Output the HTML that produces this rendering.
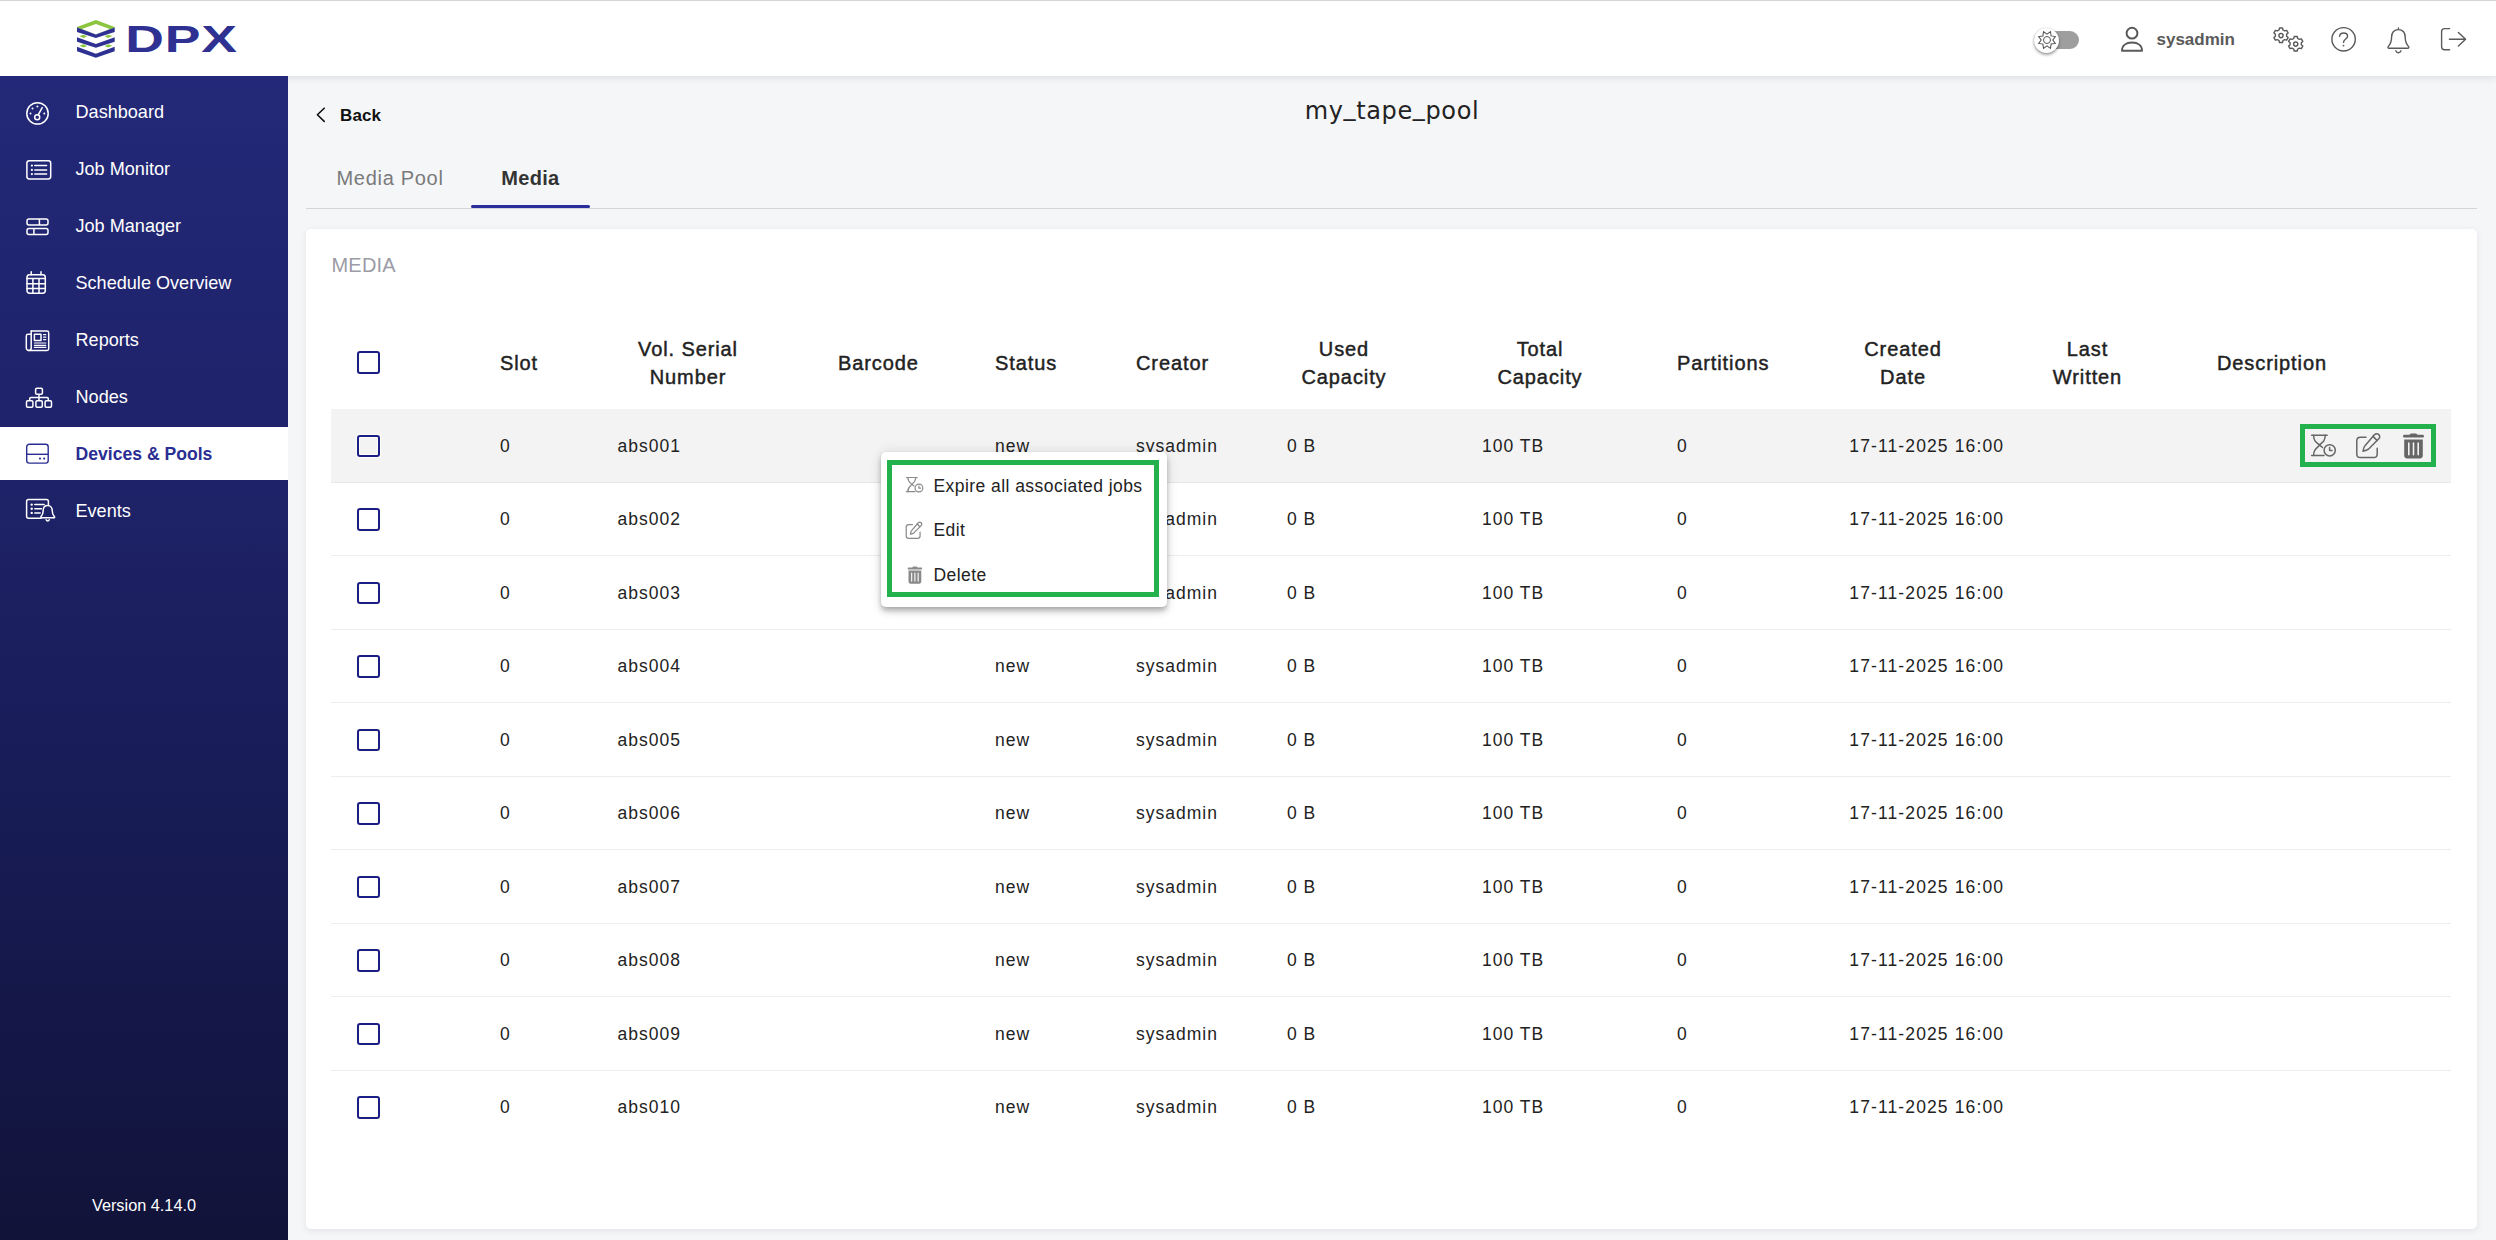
<!DOCTYPE html>
<html lang="en">
<head>
<meta charset="utf-8">
<title>DPX - my_tape_pool - Media</title>
<style>
*{box-sizing:border-box;margin:0;padding:0}
html,body{width:2496px;height:1240px;overflow:hidden}
body{position:relative;background:#f5f6f8;font-family:"Liberation Sans",sans-serif;color:#222;-webkit-font-smoothing:antialiased}
svg{display:block;overflow:visible}
.abs{position:absolute}

/* ---------- top bar ---------- */
#topbar{position:absolute;left:0;top:0;width:2496px;height:76px;background:#fff;box-shadow:inset 0 1px 0 #d3d4d8,0 1px 8px rgba(60,64,80,.16);z-index:2}
#logo{position:absolute;left:76.8px;top:19.6px}
#toggle{position:absolute;left:2034px;top:27.2px;width:46px;height:26px}
#toggle .track{position:absolute;left:0;top:3.8px;width:45px;height:17.7px;border-radius:9px;background:#9e9e9e}
#toggle .thumb{position:absolute;left:0;top:0.5px;width:25px;height:25px;border-radius:50%;background:#fff;box-shadow:0 2px 3px rgba(0,0,0,.35),0 0 2px rgba(0,0,0,.2)}
#user{position:absolute;left:2156.5px;top:27.3px;height:26px;line-height:26px;font-size:17px;font-weight:bold;color:#5a5a5a;letter-spacing:0}

/* ---------- sidebar ---------- */
#sidebar{position:absolute;left:0;top:76px;width:288px;height:1164px;background:linear-gradient(180deg,#232878 0%,#1e2268 35%,#161a50 70%,#111339 100%);z-index:3}
.nav{position:absolute;left:0;width:288px;height:53px}
.nav span{position:absolute;left:75.5px;top:0.7px;height:53px;line-height:53px;font-size:18.1px;letter-spacing:0;color:#fff;white-space:nowrap}
.nav svg{position:absolute}
.nav.active{background:#fff}
.nav.active span{color:#2a2e93;font-weight:bold;font-size:17.6px;letter-spacing:0;top:.8px}
#version{position:absolute;left:0;width:288px;top:1119.4px;text-align:center;color:#fff;font-size:16.3px;line-height:20px}

/* ---------- main ---------- */
#back{position:absolute;left:340px;top:104.2px;height:24px;line-height:24px;font-size:17px;letter-spacing:.1px;font-weight:bold;color:#111}
#title{position:absolute;left:1092px;width:600px;top:94px;height:34px;line-height:34px;text-align:center;font-family:"DejaVu Sans","Liberation Sans",sans-serif;font-size:24px;letter-spacing:.62px;color:#222}
#title span{position:relative;top:-4.2px}
.tab{position:absolute;top:164px;height:28px;line-height:28px;font-size:20px;white-space:nowrap}
#tabline{position:absolute;left:306px;top:208px;width:2171px;height:1px;background:#d4d6db}
#inkbar{position:absolute;left:471px;top:204.5px;width:119px;height:3.5px;border-radius:2px;background:#2b2f9c}
#card{position:absolute;left:306px;top:229px;width:2171px;height:1000px;background:#fff;border-radius:5px;box-shadow:0 2px 6px rgba(60,64,80,.10)}
#cardtitle{position:absolute;left:331.5px;top:251px;height:28px;line-height:28px;font-size:20px;color:#9b9ba6;letter-spacing:.2px}
</style>
</head>
<body>

<!-- ================= TOP BAR ================= -->
<div id="topbar">
  <svg id="logo" width="162" height="40" viewBox="0 0 162 40">
    <!-- stacked layers mark -->
    <polygon points="0,6.9 18.85,0 37.7,6.9 37.7,7.7 18.85,14.6 0,7.7" fill="#8cc63f"/>
    <polygon points="18.85,3.9 32.9,9 18.85,14.5 4.8,9" fill="#fff"/>
    <polygon points="0,7.5 18.85,14.4 37.7,7.5 37.7,12 18.85,18.1 0,12" fill="#2e3192"/>
    <polygon points="2.4,16.1 6.2,14.7 10.2,16.3 6.6,17.9" fill="#8cc63f"/>
    <polygon points="35.3,16.1 31.5,14.7 27.5,16.3 31.1,17.9" fill="#8cc63f"/>
    <polygon points="0,17.15 18.85,24.05 37.7,17.15 37.7,21.65 18.85,27.75 0,21.65" fill="#2e3192"/>
    <polygon points="2.4,25.75 6.2,24.35 10.2,25.95 6.6,27.55" fill="#8cc63f"/>
    <polygon points="35.3,25.75 31.5,24.35 27.5,25.95 31.1,27.55" fill="#8cc63f"/>
    <polygon points="0,26.8 18.85,33.7 37.7,26.8 37.7,31.3 18.85,37.7 0,31.3" fill="#2e3192"/>
    <text x="0" y="0" transform="translate(48.2,32.1) scale(1.425,1)" font-family="Liberation Sans, sans-serif" font-weight="bold" font-size="37.6" fill="#2e3192" letter-spacing="0.6">DPX</text>
  </svg>

  <div id="toggle">
    <div class="track"></div>
    <div class="thumb"></div>
    <svg class="abs" style="left:3.5px;top:4px" width="18" height="18" viewBox="-9 -9 18 18" fill="none" stroke="#555" stroke-width="1">
      <polygon transform="rotate(22.5) scale(1.05)" points="0,-8.6 2.1,-5.1 6.1,-6.1 5.1,-2.1 8.6,0 5.1,2.1 6.1,6.1 2.1,5.1 0,8.6 -2.1,5.1 -6.1,6.1 -5.1,2.1 -8.6,0 -5.1,-2.1 -6.1,-6.1 -2.1,-5.1" stroke-linejoin="miter"/>
      <circle r="3.5"/>
    </svg>
  </div>

  <svg class="abs" style="left:2120px;top:26px" width="24" height="26" viewBox="0 0 24 26" fill="none" stroke="#5a5a5a" stroke-width="2">
    <circle cx="12" cy="7.2" r="5.4"/>
    <path d="M2 24.8 C2 19.5 6 16.6 12 16.6 C18 16.6 22 19.5 22 24.8 Z" stroke-linejoin="round"/>
  </svg>
  <div id="user">sysadmin</div>

  <!-- cogs -->
  <svg class="abs" style="left:2272px;top:26px" width="34" height="28" viewBox="0 0 34 28" fill="none" stroke="#5a5a5a" stroke-width="1.4">
    <g transform="translate(9,9.6)">
      <path d="M-1.5,-7.6 h3 l.5,2 l1.6,.9 l2,-.6 l1.5,2.6 l-1.5,1.4 v1.9 l1.5,1.4 l-1.5,2.6 l-2,-.6 l-1.6,.9 l-.5,2 h-3 l-.5,-2 l-1.6,-.9 l-2,.6 l-1.5,-2.6 l1.5,-1.4 v-1.9 l-1.5,-1.4 l1.5,-2.6 l2,.6 l1.6,-.9 z" stroke-linejoin="round"/>
      <circle r="2.1"/>
    </g>
    <g transform="translate(23.7,18.1)">
      <path d="M-1.5,-7.6 h3 l.5,2 l1.6,.9 l2,-.6 l1.5,2.6 l-1.5,1.4 v1.9 l1.5,1.4 l-1.5,2.6 l-2,-.6 l-1.6,.9 l-.5,2 h-3 l-.5,-2 l-1.6,-.9 l-2,.6 l-1.5,-2.6 l1.5,-1.4 v-1.9 l-1.5,-1.4 l1.5,-2.6 l2,.6 l1.6,-.9 z" stroke-linejoin="round"/>
      <circle r="2.1"/>
    </g>
  </svg>
  <!-- help -->
  <svg class="abs" style="left:2330px;top:26px" width="28" height="28" viewBox="0 0 28 28" fill="none" stroke="#5a5a5a" stroke-width="1.4">
    <circle cx="13.6" cy="13.3" r="11.7"/>
    <path d="M9.6 10.3 C9.8 7.9 11.5 7 13.6 7 C16 7 17.6 8.3 17.6 10.2 C17.6 13 13.5 13.2 13.5 16.4" stroke-linecap="round"/>
    <circle cx="13.5" cy="19.6" r=".9" fill="#5a5a5a" stroke="none"/>
  </svg>
  <!-- bell -->
  <svg class="abs" style="left:2386px;top:25.6px" width="26" height="28" viewBox="0 0 26 28" fill="none" stroke="#5a5a5a" stroke-width="1.4" stroke-linecap="round" stroke-linejoin="round">
    <path d="M12.4 2 v1.6 M12.4 3.6 C7.8 3.6 5.6 7 5.6 11 C5.6 16.5 4 18.6 2.2 20.6 C1.6 21.4 2 22.3 3 22.3 H21.8 C22.8 22.3 23.2 21.4 22.6 20.6 C20.8 18.6 19.2 16.5 19.2 11 C19.2 7 17 3.6 12.4 3.6 Z"/>
    <path d="M9.8 24.8 C10.3 26.2 11.3 26.8 12.4 26.8 C13.5 26.8 14.5 26.2 15 24.8"/>
  </svg>
  <!-- logout -->
  <svg class="abs" style="left:2440px;top:26.6px" width="28" height="26" viewBox="0 0 28 26" fill="none" stroke="#5a5a5a" stroke-width="1.4" stroke-linecap="round" stroke-linejoin="round">
    <path d="M9.6 1.6 H4.6 C2.8 1.6 1.6 2.8 1.6 4.6 V19.8 C1.6 21.6 2.8 22.8 4.6 22.8 H9.6"/>
    <path d="M9.4 12.2 H25.4 M18.4 5.4 L25.6 12.2 L18.4 19"/>
  </svg>
</div>

<!-- ================= SIDEBAR ================= -->
<div id="sidebar">
  <div class="nav" style="top:9.750px">
    <svg style="left:25px;top:15px" width="25" height="25" viewBox="0 0 25 25" fill="none" stroke="#fff" stroke-width="1.5" stroke-linecap="round">
      <circle cx="12.5" cy="12.4" r="10.7"/>
      <circle cx="12.2" cy="16.2" r="2.5"/>
      <path d="M13.2 13.9 L17.2 6.6"/>
      <g fill="#fff" stroke="none"><circle cx="7.5" cy="7.5" r="1"/><circle cx="12.4" cy="5.5" r="1"/><circle cx="5.5" cy="12.4" r="1"/><circle cx="19.3" cy="12.4" r="1"/></g>
    </svg>
    <span>Dashboard</span>
  </div>
  <div class="nav" style="top:66.625px">
    <svg style="left:25px;top:16px" width="28" height="22" viewBox="0 0 28 22" fill="none" stroke="#fff" stroke-width="1.5" stroke-linecap="round">
      <rect x="1.9" y="1.7" width="23.8" height="18.2" rx="2.4"/>
      <path d="M9.8 6.6 H21.6 M9.8 10.9 H21.6 M9.8 15.1 H21.6"/>
      <g fill="#fff" stroke="none"><circle cx="6.9" cy="6.6" r="1.1"/><circle cx="6.9" cy="10.9" r="1.1"/><circle cx="6.9" cy="15.1" r="1.1"/></g>
    </svg>
    <span>Job Monitor</span>
  </div>
  <div class="nav" style="top:123.500px">
    <svg style="left:25px;top:18px" width="26" height="20" viewBox="0 0 26 20" fill="none" stroke="#fff" stroke-width="1.5">
      <rect x="2" y="1.1" width="21" height="5.8" rx="2"/>
      <rect x="2" y="10.6" width="21" height="5.8" rx="2"/>
      <path d="M14.4 1.1 V6.9 M8.9 10.6 V16.4"/>
    </svg>
    <span>Job Manager</span>
  </div>
  <div class="nav" style="top:180.375px">
    <svg style="left:25px;top:14px" width="24" height="26" viewBox="0 0 24 26" fill="none" stroke="#fff" stroke-width="1.5" stroke-linecap="round">
      <rect x="2" y="4.8" width="18.3" height="18.4" rx="2.6"/>
      <path d="M6.2 1.8 V4.8 M16 1.8 V4.8 M2 8.4 H20.3 M2 13.7 H20.3 M2 18.6 H20.3 M7.9 8.4 V23.2 M14 8.4 V23.2"/>
    </svg>
    <span>Schedule Overview</span>
  </div>
  <div class="nav" style="top:237.250px">
    <svg style="left:25px;top:16.6px" width="26" height="22" viewBox="0 0 26 22" fill="none" stroke="#fff" stroke-width="1.5" stroke-linecap="round" stroke-linejoin="round">
      <path d="M6.2 1.1 H22 C23 1.1 23.7 1.8 23.7 2.8 V18.7 C23.7 19.7 23 20.4 22 20.4 H3.8 C2.4 20.4 1.3 19.3 1.3 17.9 V6 C1.3 5 2 4.3 3 4.3 H6.2"/>
      <path d="M6.2 1.1 V17.9 C6.2 19.3 5.2 20.4 3.8 20.4"/>
      <rect x="9.4" y="4.3" width="6.6" height="6.1"/>
      <path d="M18.6 4.7 H20.8 M18.6 7.2 H20.8 M18.6 9.7 H20.8 M9.4 13 H20.8 M9.4 15.3 H20.8 M9.4 17.4 H20.8" stroke-width="1.2"/>
    </svg>
    <span>Reports</span>
  </div>
  <div class="nav" style="top:294.125px">
    <svg style="left:25px;top:16.5px" width="28" height="22" viewBox="0 0 28 22" fill="none" stroke="#fff" stroke-width="1.5" stroke-linejoin="round">
      <rect x="10.6" y="1.2" width="6.8" height="6" rx="1.2"/>
      <rect x="1.5" y="13.8" width="6.4" height="6.4" rx="1.2"/>
      <rect x="10.9" y="13.8" width="6.4" height="6.4" rx="1.2"/>
      <rect x="20.1" y="13.8" width="6.4" height="6.4" rx="1.2"/>
      <path d="M14 7.2 V13.8 M4.7 13.8 V11.8 C4.7 11 5.2 10.5 6 10.5 H22 C22.8 10.5 23.3 11 23.3 11.800000000000001 V13.8"/>
    </svg>
    <span>Nodes</span>
  </div>
  <div class="nav active" style="top:351.000px">
    <svg style="left:25px;top:16px" width="26" height="22" viewBox="0 0 26 22" fill="none" stroke="#2a2e93" stroke-width="1.4">
      <rect x="1.7" y="1.3" width="21.5" height="18.8" rx="2.6"/>
      <path d="M1.7 11.3 H23.2"/>
      <g fill="#2a2e93" stroke="none"><circle cx="15" cy="15.6" r="1.05"/><circle cx="19.2" cy="15.6" r="1.05"/></g>
    </svg>
    <span>Devices &amp; Pools</span>
  </div>
  <div class="nav" style="top:407.875px">
    <svg style="left:25px;top:14px" width="32" height="26" viewBox="0 0 32 26" fill="none" stroke="#fff" stroke-width="1.5" stroke-linecap="round" stroke-linejoin="round">
      <path d="M16 20.3 H3.6 C2.4 20.3 1.6 19.5 1.6 18.3 V3.5 C1.6 2.300000000000001 2.4 1.5 3.6 1.5 H21.4 C22.6 1.5 23.4 2.3 23.4 3.5 V6.5"/>
      <path d="M9.8 6.6 H19.2 M9.8 10.7 H16.4 M9.8 14.9 H15.2"/>
      <g fill="#fff" stroke="none"><circle cx="6.7" cy="6.6" r="1.2"/><circle cx="6.7" cy="10.7" r="1.2"/><circle cx="6.7" cy="14.9" r="1.2"/></g>
      <path d="M22.7 7.6 C19.6 7.6 18.2 10 18.2 12.6 C18.2 16 17.2 17.4 16 18.6 C15.6 19.1 15.8 19.8 16.5 19.8 H28.9 C29.6 19.8 29.8 19.1 29.4 18.6 C28.2 17.4 27.2 16 27.2 12.6 C27.2 10 25.8 7.6 22.7 7.6 Z" fill="#1d2166"/>
      <path d="M21.2 21.8 C21.5 22.6 22 23 22.7 23 C23.4 23 23.9 22.6 24.2 21.8"/>
    </svg>
    <span>Events</span>
  </div>
  <div id="version">Version 4.14.0</div>
</div>

<!-- ================= MAIN ================= -->
<svg class="abs" style="left:315px;top:106px" width="12" height="18" viewBox="0 0 12 18" fill="none" stroke="#111" stroke-width="1.6" stroke-linecap="round" stroke-linejoin="round"><path d="M9.2 2.2 L2.4 8.8 L9.2 15.4"/></svg>
<div id="back">Back</div>
<div id="title">my<span>_</span>tape<span>_</span>pool</div>

<div class="tab" style="left:336.5px;color:#7a7a7a;letter-spacing:.7px">Media Pool</div>
<div class="tab" style="left:501.3px;color:#333;font-weight:bold;letter-spacing:.3px">Media</div>
<div id="tabline"></div>
<div id="inkbar"></div>

<div id="card"></div>
<div id="cardtitle">MEDIA</div>

<!--TABLE-->

<style>
#thead{position:absolute;left:331px;top:315px;width:2120px;height:94px}
.th{position:absolute;top:19.8px;line-height:28px;font-size:20px;color:#222;white-space:nowrap;letter-spacing:.9px;-webkit-text-stroke:.45px #222;text-align:center}
.th.one{top:33.7px}
.cb{position:absolute;left:26px;width:23px;height:22.5px;border:2px solid #1a1e86;border-radius:3px;background:transparent;box-shadow:0 0 0 1px #fffef6,inset 0 0 0 1px #fffef6}
.row{position:absolute;left:331px;width:2120px;height:73.5px;border-bottom:1px solid #ededee}
.row.hl{background:#f3f3f3;border-bottom-color:#e6e6e6}
.row.last{border-bottom:none}
.row .cb{top:25.2px}
.c{position:absolute;top:22.4px;height:28px;line-height:28px;font-size:17.5px;letter-spacing:1px;color:#222;white-space:nowrap}
</style>

<div id="thead">
  <div class="cb" style="top:36.2px"></div>
  <div class="th one" style="left:169px">Slot</div>
  <div class="th" style="left:287px;width:140px">Vol. Serial<br>Number</div>
  <div class="th one" style="left:507px">Barcode</div>
  <div class="th one" style="left:664px">Status</div>
  <div class="th one" style="left:805px">Creator</div>
  <div class="th" style="left:953px;width:120px">Used<br>Capacity</div>
  <div class="th" style="left:1149px;width:120px">Total<br>Capacity</div>
  <div class="th one" style="left:1346px">Partitions</div>
  <div class="th" style="left:1512px;width:120px">Created<br>Date</div>
  <div class="th" style="left:1696.5px;width:120px">Last<br>Written</div>
  <div class="th one" style="left:1886px">Description</div>
</div>
<div class="row hl" style="top:409.4px">
  <div class="cb"></div>
  <div class="c" style="left:169px">0</div>
  <div class="c" style="left:286.5px">abs001</div>
  <div class="c" style="left:664px">new</div>
  <div class="c" style="left:805px">sysadmin</div>
  <div class="c" style="left:956px">0 B</div>
  <div class="c" style="left:1151px">100 TB</div>
  <div class="c" style="left:1346px">0</div>
  <div class="c" style="left:1518.3px;letter-spacing:1.12px">17-11-2025 16:00</div>
</div>
<div class="row" style="top:482.9px">
  <div class="cb"></div>
  <div class="c" style="left:169px">0</div>
  <div class="c" style="left:286.5px">abs002</div>
  <div class="c" style="left:664px">new</div>
  <div class="c" style="left:805px">sysadmin</div>
  <div class="c" style="left:956px">0 B</div>
  <div class="c" style="left:1151px">100 TB</div>
  <div class="c" style="left:1346px">0</div>
  <div class="c" style="left:1518.3px;letter-spacing:1.12px">17-11-2025 16:00</div>
</div>
<div class="row" style="top:556.4px">
  <div class="cb"></div>
  <div class="c" style="left:169px">0</div>
  <div class="c" style="left:286.5px">abs003</div>
  <div class="c" style="left:664px">new</div>
  <div class="c" style="left:805px">sysadmin</div>
  <div class="c" style="left:956px">0 B</div>
  <div class="c" style="left:1151px">100 TB</div>
  <div class="c" style="left:1346px">0</div>
  <div class="c" style="left:1518.3px;letter-spacing:1.12px">17-11-2025 16:00</div>
</div>
<div class="row" style="top:629.9px">
  <div class="cb"></div>
  <div class="c" style="left:169px">0</div>
  <div class="c" style="left:286.5px">abs004</div>
  <div class="c" style="left:664px">new</div>
  <div class="c" style="left:805px">sysadmin</div>
  <div class="c" style="left:956px">0 B</div>
  <div class="c" style="left:1151px">100 TB</div>
  <div class="c" style="left:1346px">0</div>
  <div class="c" style="left:1518.3px;letter-spacing:1.12px">17-11-2025 16:00</div>
</div>
<div class="row" style="top:703.4px">
  <div class="cb"></div>
  <div class="c" style="left:169px">0</div>
  <div class="c" style="left:286.5px">abs005</div>
  <div class="c" style="left:664px">new</div>
  <div class="c" style="left:805px">sysadmin</div>
  <div class="c" style="left:956px">0 B</div>
  <div class="c" style="left:1151px">100 TB</div>
  <div class="c" style="left:1346px">0</div>
  <div class="c" style="left:1518.3px;letter-spacing:1.12px">17-11-2025 16:00</div>
</div>
<div class="row" style="top:776.9px">
  <div class="cb"></div>
  <div class="c" style="left:169px">0</div>
  <div class="c" style="left:286.5px">abs006</div>
  <div class="c" style="left:664px">new</div>
  <div class="c" style="left:805px">sysadmin</div>
  <div class="c" style="left:956px">0 B</div>
  <div class="c" style="left:1151px">100 TB</div>
  <div class="c" style="left:1346px">0</div>
  <div class="c" style="left:1518.3px;letter-spacing:1.12px">17-11-2025 16:00</div>
</div>
<div class="row" style="top:850.4px">
  <div class="cb"></div>
  <div class="c" style="left:169px">0</div>
  <div class="c" style="left:286.5px">abs007</div>
  <div class="c" style="left:664px">new</div>
  <div class="c" style="left:805px">sysadmin</div>
  <div class="c" style="left:956px">0 B</div>
  <div class="c" style="left:1151px">100 TB</div>
  <div class="c" style="left:1346px">0</div>
  <div class="c" style="left:1518.3px;letter-spacing:1.12px">17-11-2025 16:00</div>
</div>
<div class="row" style="top:923.9px">
  <div class="cb"></div>
  <div class="c" style="left:169px">0</div>
  <div class="c" style="left:286.5px">abs008</div>
  <div class="c" style="left:664px">new</div>
  <div class="c" style="left:805px">sysadmin</div>
  <div class="c" style="left:956px">0 B</div>
  <div class="c" style="left:1151px">100 TB</div>
  <div class="c" style="left:1346px">0</div>
  <div class="c" style="left:1518.3px;letter-spacing:1.12px">17-11-2025 16:00</div>
</div>
<div class="row" style="top:997.4px">
  <div class="cb"></div>
  <div class="c" style="left:169px">0</div>
  <div class="c" style="left:286.5px">abs009</div>
  <div class="c" style="left:664px">new</div>
  <div class="c" style="left:805px">sysadmin</div>
  <div class="c" style="left:956px">0 B</div>
  <div class="c" style="left:1151px">100 TB</div>
  <div class="c" style="left:1346px">0</div>
  <div class="c" style="left:1518.3px;letter-spacing:1.12px">17-11-2025 16:00</div>
</div>
<div class="row last" style="top:1070.9px">
  <div class="cb"></div>
  <div class="c" style="left:169px">0</div>
  <div class="c" style="left:286.5px">abs010</div>
  <div class="c" style="left:664px">new</div>
  <div class="c" style="left:805px">sysadmin</div>
  <div class="c" style="left:956px">0 B</div>
  <div class="c" style="left:1151px">100 TB</div>
  <div class="c" style="left:1346px">0</div>
  <div class="c" style="left:1518.3px;letter-spacing:1.12px">17-11-2025 16:00</div>
</div>

<!--POPUP-->
<style>
#actions{position:absolute;left:2300px;top:424px;width:136px;height:43px;border:5px solid #22b14c}
#menu{position:absolute;left:881px;top:452px;width:286px;height:155px;background:#fff;border-radius:5px;box-shadow:0 2.5px 5px -1.25px rgba(0,0,0,.2),0 5px 6.25px 0 rgba(0,0,0,.14),0 1.25px 12.5px 0 rgba(0,0,0,.12);z-index:5}
#menu .frame{position:absolute;left:6px;top:8px;width:272px;height:137px;border:5px solid #22b14c}
.mi{position:absolute;left:52.4px;height:28px;line-height:28px;font-size:17.5px;letter-spacing:.45px;color:#222;white-space:nowrap}
</style>
<div id="actions">
  <!-- expire (hourglass + clock) -->
  <svg class="abs" style="left:5px;top:4px" width="28" height="26" viewBox="0 0 28 26" fill="none" stroke="#666" stroke-width="1.5" stroke-linecap="round" stroke-linejoin="round">
    <path d="M1.6 2.2 H17.2 M1.6 22.6 H14"/>
    <path d="M3.6 2.2 C3.6 7.4 5.4 8.6 9.4 12 C13.4 8.6 15.2 7.4 15.2 2.2"/>
    <path d="M9.4 12 L12.4 14.4"/>
    <path d="M3.6 22.6 C3.6 17.4 5.4 16 9.4 12.4"/>
    <circle cx="19.7" cy="17.3" r="5.6" fill="#f3f3f3"/>
    <path d="M19.6 14.6 V17.6 H22"/>
  </svg>
  <!-- edit -->
  <svg class="abs" style="left:50px;top:3px" width="28" height="28" viewBox="0 0 28 28" fill="none" stroke="#666" stroke-width="1.5" stroke-linecap="round" stroke-linejoin="round">
    <path d="M11 5.2 H5.4 C3.2 5.2 1.8 6.600000000000001 1.8 8.8 V22 C1.8 24.2 3.2 25.6 5.4 25.6 H18.6 C20.8 25.6 22.2 24.2 22.2 22 V16.2"/>
    <path d="M19.6 2.6 C20.8 1.4 22.6 1.4 23.8 2.6 C25 3.8 25 5.6 23.8 6.800000000000001 L13.4 17.2 C12.2 18.2 10.4 18.8 8 19.2 C8.4 16.8 8.8 15 10 13.8 Z"/>
    <path d="M18 4.4 L22 8.4"/>
  </svg>
  <!-- trash -->
  <svg class="abs" style="left:97px;top:3.6px" width="24" height="27" viewBox="0 0 24 27" fill="#666" stroke="none">
    <path d="M7.6 1.8 C8 .8 8.8 .4 9.6 .4 H13.400000000000002 C14.2 .4 15 .8 15.4 1.8 H20.6 C21.4 1.8 22 2.4 22 3.2 C22 4 21.4 4.6 20.6 4.6 H2.4 C1.6 4.6 1 4 1 3.2 C1 2.4 1.6 1.8 2.4 1.8 Z"/>
    <path fill-rule="evenodd" d="M2.2 6.4 H20.8 V22.4 C20.8 24.2 19.6 25.4 17.8 25.4 H5.2 C3.4 25.4 2.2 24.2 2.2 22.4 Z M6 10.2 V21.6 C6 22.8 7.6 22.8 7.6 21.6 V10.2 C7.6 9 6 9 6 10.2 Z M10.7 10.2 V21.6 C10.7 22.8 12.3 22.8 12.3 21.6 V10.2 C12.3 9 10.7 9 10.7 10.2 Z M15.4 10.2 V21.6 C15.4 22.8 17 22.8 17 21.6 V10.2 C17 9 15.4 9 15.4 10.2 Z"/>
  </svg>
</div>

<div id="menu">
  <div class="frame"></div>
  <svg class="abs" style="left:24px;top:24px" width="20" height="18" viewBox="0 0 28 26" fill="none" stroke="#8a8a8a" stroke-width="1.7" stroke-linecap="round" stroke-linejoin="round">
    <path d="M1.6 2.2 H17.2 M1.6 22.6 H14"/>
    <path d="M3.6 2.2 C3.6 7.4 5.4 8.6 9.4 12 C13.4 8.6 15.2 7.4 15.2 2.2"/>
    <path d="M9.4 12 L12.4 14.4"/>
    <path d="M3.6 22.6 C3.6 17.4 5.4 16 9.4 12.4"/>
    <circle cx="19.7" cy="17.3" r="5.6" fill="#fff"/>
    <path d="M19.6 14.6 V17.6 H22"/>
  </svg>
  <div class="mi" style="top:19.7px">Expire all associated jobs</div>
  <svg class="abs" style="left:24px;top:68.7px" width="19" height="19" viewBox="0 0 28 28" fill="none" stroke="#8a8a8a" stroke-width="1.8" stroke-linecap="round" stroke-linejoin="round">
    <path d="M11 5.2 H5.4 C3.2 5.2 1.8 6.6 1.8 8.8 V22 C1.8 24.2 3.2 25.6 5.4 25.6 H18.6 C20.8 25.6 22.2 24.2 22.2 22 V16.2"/>
    <path d="M19.6 2.6 C20.8 1.4 22.6 1.4 23.8 2.6 C25 3.8 25 5.6 23.8 6.8 L13.4 17.2 C12.2 18.2 10.4 18.8 8 19.2 C8.4 16.8 8.8 15 10 13.8 Z"/>
    <path d="M18 4.4 L22 8.4"/>
  </svg>
  <div class="mi" style="top:64.4px">Edit</div>
  <svg class="abs" style="left:25.5px;top:113.5px" width="16.5" height="19" viewBox="0 0 24 27" fill="#8a8a8a" stroke="none">
    <path d="M7.6 1.8 C8 .8 8.8 .4 9.6 .4 H13.4 C14.2 .4 15 .8 15.4 1.8 H20.6 C21.4 1.8 22 2.4 22 3.2 C22 4 21.4 4.6 20.6 4.6 H2.4 C1.6 4.6 1 4 1 3.2 C1 2.4 1.6 1.8 2.4 1.8 Z"/>
    <path fill-rule="evenodd" d="M2.2 6.4 H20.8 V22.4 C20.8 24.2 19.6 25.4 17.8 25.4 H5.2 C3.4 25.4 2.2 24.2 2.2 22.4 Z M6 10.2 V21.6 C6 22.8 7.6 22.8 7.6 21.6 V10.2 C7.6 9 6 9 6 10.2 Z M10.7 10.2 V21.6 C10.7 22.8 12.3 22.8 12.3 21.6 V10.2 C12.3 9 10.7 9 10.7 10.2 Z M15.4 10.2 V21.6 C15.4 22.8 17 22.8 17 21.6 V10.2 C17 9 15.4 9 15.4 10.2 Z"/>
  </svg>
  <div class="mi" style="top:109px">Delete</div>
</div>
<!--ENDPOPUP-->

</body>
</html>
